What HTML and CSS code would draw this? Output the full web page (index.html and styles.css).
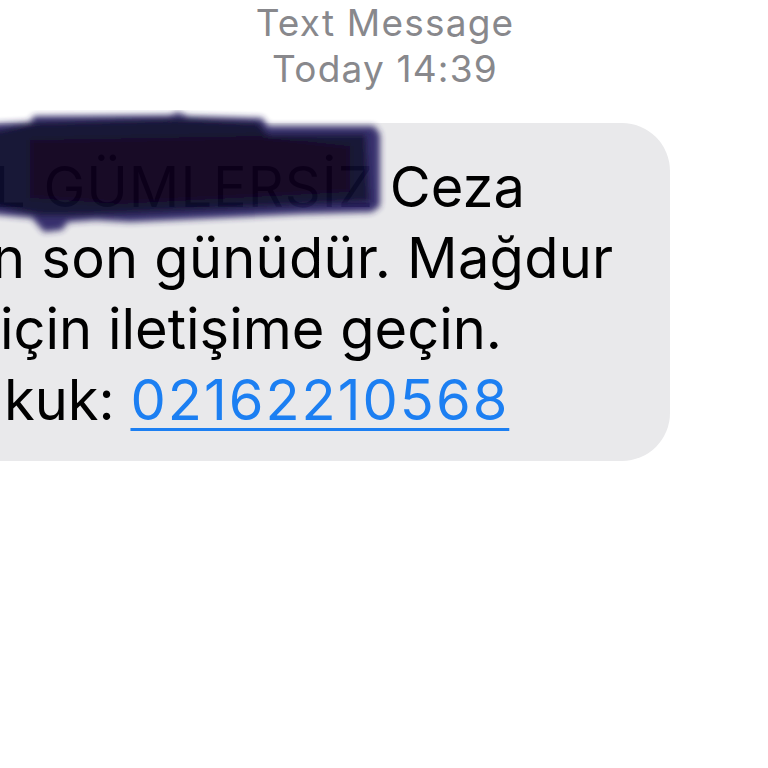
FILE: index.html
```html
<!DOCTYPE html>
<html lang="tr">

<head>
  <meta charset="UTF-8">
  <meta name="viewport" content="width=device-width, initial-scale=1.0">
  <title>Text Message</title>
  <link rel="stylesheet" href="styles.css">
</head>

<body>

  <div class="thread-meta">
    <div class="meta-title">Text Message</div>
    <div class="meta-time">Today 14:39</div>
  </div>

  <div class="bubble">
    <div class="line line-1">
      <span class="name">L GÜMLERSİZ</span> Ceza
      <!-- marker scribble drawn over the name -->
      <svg class="scribble" width="400" height="140" viewBox="0 0 400 140" aria-hidden="true">
        <defs>
          <filter id="ink" x="-10%" y="-20%" width="120%" height="140%">
            <feGaussianBlur stdDeviation="3" />
          </filter>
        </defs>
        <g filter="url(#ink)">
          <path d="M-10 14 L30 12 L34 6 L170 5 L178 2 L188 6 L262 8 L268 16 L374 16 L380 24 L380 96 L372 102 L300 104 L130 112 L96 110 L68 112 L62 120 L44 122 L32 108 L-10 104 Z" fill="#2d2868" />
          <path d="M-10 22 L36 12 L176 8 L258 12 L268 24 L366 24 L370 92 L300 96 L130 104 L64 106 L42 106 L-10 96 Z" fill="#0f0b2e" />
          <path d="M30 30 L260 26 L350 36 L350 82 L120 94 L30 88 Z" fill="#07051c" />
        </g>
      </svg>
    </div>
    <div class="line line-2">n son günüdür. Mağdur</div>
    <div class="line line-3">için iletişime geçin.</div>
    <div class="line line-4">kuk: <a class="phone" href="tel:02162210568">02162210568</a></div>
  </div>

</body>

</html>
```

FILE: styles.css
```css
body {
  margin: 0;
  padding: 0;
  background-color: #fff;
  font-family: Inter, "Noto Sans", sans-serif;
  overflow: hidden;
}

.thread-meta {
  text-align: center;
  color: #88888c;
  font-size: 37px;
  line-height: 46px;
  letter-spacing: 1.2px;
  margin-left: 2px;
}

.bubble {
  margin: 31px 98px 0 -60px;
  padding: 29px 0 25px 60px;
  background-color: #e9e9eb;
  border-radius: 0 48px 48px 0;
  color: #000;
  font-size: 56px;
  line-height: 71px;
  white-space: nowrap;
}

.line {
  position: relative;
}

.line-1 {
  text-indent: -6px;
}

.line-1 .name {
  letter-spacing: 1px;
}

.line-2 {
  text-indent: -8px;
  letter-spacing: 0.25px;
}

.line-3 {
  text-indent: 0;
}

.line-4 {
  text-indent: 4px;
}

.phone {
  color: #1c7ff2;
  letter-spacing: 2px;
  text-decoration: underline;
  text-decoration-thickness: 3px;
  text-underline-offset: 8px;
}

.scribble {
  position: absolute;
  left: 0;
  top: -42px;
  opacity: 0.95;
}
```
